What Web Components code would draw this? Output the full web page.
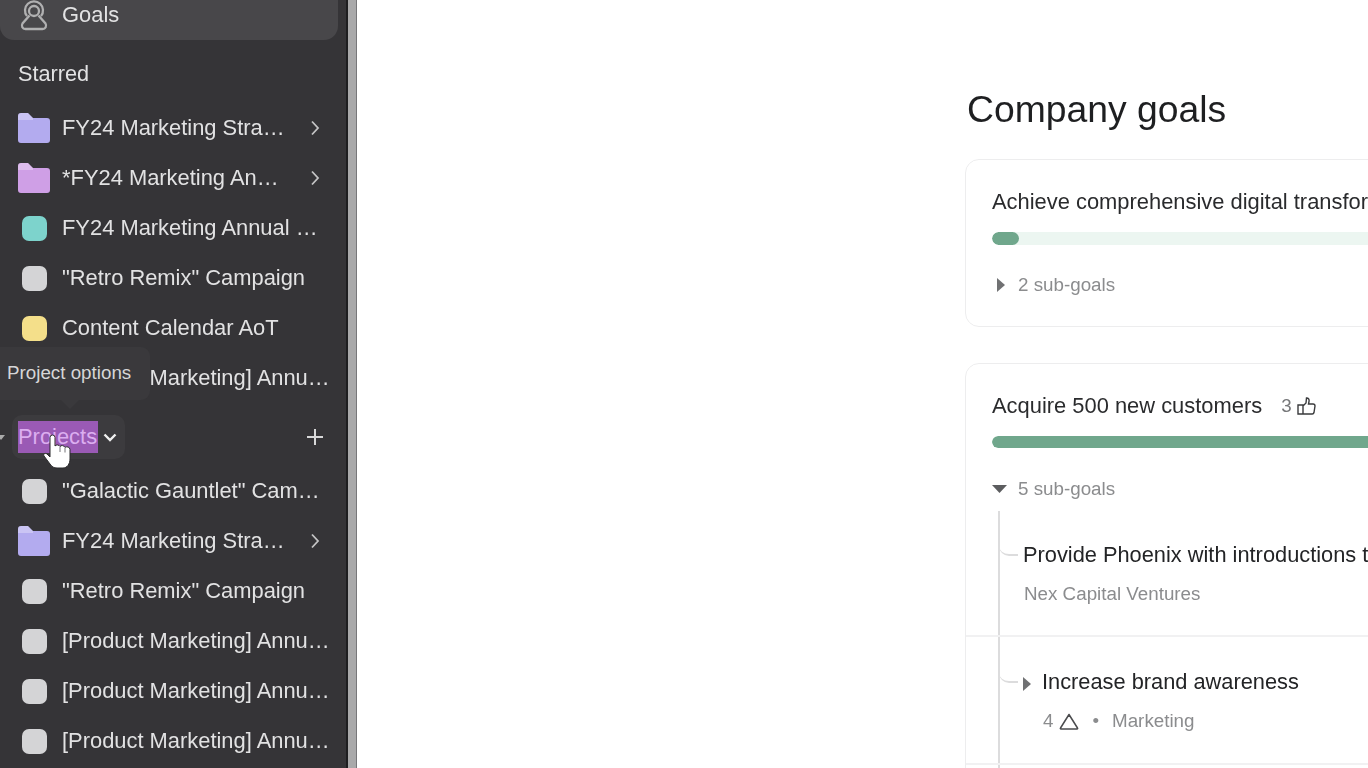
<!DOCTYPE html>
<html lang="en">
<head>
<meta charset="utf-8">
<title>Company goals</title>
<style>
  html, body { margin: 0; height: 100%; overflow: hidden; background: #fff; }
  body { font-family: "Liberation Sans", Arial, sans-serif; }
</style>
</head>
<body>
<app-shell>
  <side-bar slot="side">
    <nav-row icon="goal" active>Goals</nav-row>
    <side-heading>Starred</side-heading>
    <nav-row icon="folder" color="#b3abef" more>FY24 Marketing Stra…</nav-row>
    <nav-row icon="folder" color="#cf9fe6" more>*FY24 Marketing An…</nav-row>
    <nav-row color="#7dd3cc">FY24 Marketing Annual …</nav-row>
    <nav-row>"Retro Remix" Campaign</nav-row>
    <nav-row color="#f4df8a">Content Calendar AoT</nav-row>
    <nav-row>[Product Marketing] Annu…</nav-row>
    <projects-header></projects-header>
    <nav-row>"Galactic Gauntlet" Cam…</nav-row>
    <nav-row icon="folder" color="#b3abef" more>FY24 Marketing Stra…</nav-row>
    <nav-row>"Retro Remix" Campaign</nav-row>
    <nav-row>[Product Marketing] Annu…</nav-row>
    <nav-row>[Product Marketing] Annu…</nav-row>
    <nav-row>[Product Marketing] Annu…</nav-row>
  </side-bar>
  <goals-page>
    <goal-card progress="27" toggle="closed" count="2 sub-goals">Achieve comprehensive digital transformation across the business</goal-card>
    <goal-card progress="640" toggle="open" count="5 sub-goals">
      Acquire 500 new customers<like-count slot="extra">3</like-count>
      <sub-goal slot="rows" elbow="43" title-text="Provide Phoenix with introductions to our partners">
        <span>Nex Capital Ventures</span>
      </sub-goal>
      <sub-goal slot="rows" elbow="44" expandable title-text="Increase brand awareness">
        <warn-count>4</warn-count><span class="dot">•</span><span>Marketing</span>
      </sub-goal>
      <sub-goal slot="rows" elbow="44" title-text=""></sub-goal>
    </goal-card>
  </goals-page>
</app-shell>

<script>
function tpl(html) {
  const t = document.createElement('template');
  t.innerHTML = html;
  return t;
}

const shellTpl = tpl(`
<style>
  :host { display: flex; height: 768px; overflow: hidden; filter: blur(.7px); }
  .rule { width: 11px; flex: none; box-sizing: border-box; background: #a9a9aa;
    border-left: 2px solid #1e1e20; border-right: 1px solid #77777a; }
  .main { flex: 1; min-width: 0; overflow: hidden; }
</style>
<slot name="side"></slot>
<div class="rule"></div>
<div class="main"><slot></slot></div>`);

class AppShell extends HTMLElement {
  constructor() {
    super();
    this.attachShadow({ mode: 'open' }).appendChild(shellTpl.content.cloneNode(true));
  }
}

const sideTpl = tpl(`
<style>
  :host { display: block; width: 346px; flex: none; height: 768px; overflow: hidden;
    background: #353437; color: #e2e2e3; font-size: 21.9px; position: relative; }
  .inner { margin-top: -10px; }
  .tip { position: absolute; left: 0; top: 347px; width: 150px; height: 53px; box-sizing: border-box;
    padding: 0 0 2px 7px; display: flex; align-items: center; background: #3a393c; border-radius: 0 9px 9px 0;
    font-size: 18.8px; color: #d6d6d7; }
  .tip::after { content: ""; position: absolute; left: 61px; top: 53px; border: 9px solid transparent;
    border-top-color: #3a393c; border-bottom: 0; }
</style>
<div class="inner"><slot></slot></div>
<div class="tip">Project options</div>`);

class SideBar extends HTMLElement {
  constructor() {
    super();
    this.attachShadow({ mode: 'open' }).appendChild(sideTpl.content.cloneNode(true));
  }
}

const navTpl = tpl(`
<style>
  :host { display: flex; align-items: center; height: 50px; box-sizing: border-box; padding-left: 18px; white-space: nowrap; }
  :host([active]) { background: #48474a; border-radius: 0 0 14px 14px; margin-right: 8px; }
  .ic { width: 32px; height: 30px; margin-right: 12px; flex: none; display: flex; align-items: center; justify-content: center; }
  .sq { width: 25px; height: 25px; border-radius: 7px; }
  .chev { position: absolute; left: 310px; }
  svg { display: block; }
</style>
<span class="ic"></span><slot></slot>`);

const chevron = '<svg class="chev" width="10" height="16" viewBox="0 0 10 16" fill="none" stroke="#c4c4c5" stroke-width="1.800"><path d="M2 1.500L8 8l-6 6.500"/></svg>';

class NavRow extends HTMLElement {
  constructor() {
    super();
    this.attachShadow({ mode: 'open' }).appendChild(navTpl.content.cloneNode(true));
  }

  connectedCallback() {
    const box = this.shadowRoot.querySelector('.ic');
    const kind = this.getAttribute('icon');
    const color = this.getAttribute('color') || '#d4d4d6';
    if (kind === 'folder') {
      box.innerHTML = `<svg width="32" height="30" viewBox="0 0 32 30"><path d="M0 3a3 3 0 0 1 3-3h7l5 5h14a3 3 0 0 1 3 3v19a3 3 0 0 1-3 3H3a3 3 0 0 1-3-3z" fill="${color}"/><path d="M0 3a3 3 0 0 1 3-3h7l5 5v2H0z" fill="#fff" opacity=".3"/></svg>`;
    } else if (kind === 'goal') {
      box.innerHTML = '<svg width="28" height="32" viewBox="0 0 28 32" fill="none" stroke="#b0b0b1" stroke-width="2.300"><path d="M7 17a9 9 0 1 1 14 0"/><circle cx="14" cy="12" r="5"/><path d="M9.500 16.500L2.500 24.500c-1.500 2.500 0 5.500 3 5.500h17c3 0 4.500-3 3-5.500l-7-8"/></svg>';
    } else {
      box.innerHTML = `<span class="sq" style="background:${color}"></span>`;
    }
    if (this.hasAttribute('more')) this.shadowRoot.innerHTML += chevron;
  }
}

const headTpl = tpl(`
<style>
  :host { display: flex; align-items: center; height: 63px; padding: 6px 0 1px 18px; box-sizing: border-box; font-size: 21.7px; }
</style>
<slot></slot>`);

class SideHeading extends HTMLElement {
  constructor() {
    super();
    this.attachShadow({ mode: 'open' }).appendChild(headTpl.content.cloneNode(true));
  }
}

const projTpl = tpl(`
<style>
  :host { display: flex; align-items: center; height: 63px; box-sizing: border-box; padding: 5px 23px 0 12px; position: relative; }
  .marker { position: absolute; left: -3px; top: 32px; border: 4px solid transparent; border-top: 5px solid #aaa; border-bottom: 0; }
  .chip { display: flex; align-items: center; height: 44px; width: 113px; box-sizing: border-box; padding-left: 6px;
    background: #3c3b3e; border-radius: 10px; }
  .sel { background: #9a5ab5; color: #dcaef0; height: 32px; line-height: 32px; width: 80px; }
  .down { margin-left: 5px; }
  .plus { margin-left: auto; display: block; }
  .hand { position: absolute; left: 40px; top: 29px; }
</style>
<span class="marker"></span>
<span class="chip"><span class="sel">Projects</span>
  <svg class="down" width="14" height="9" viewBox="0 0 14 9" fill="none" stroke="#f0f0f0" stroke-width="2.400"><path d="M1.500 1.500L7 7l5.500-5.500"/></svg>
</span>
<svg class="plus" width="16" height="16" viewBox="0 0 16 16" stroke="#d8d8d9" stroke-width="2"><path d="M8 0v16M0 8h16"/></svg>
<svg class="hand" width="38" height="38" viewBox="0 0 38 38"><path d="M10 5.500a2.500 2.500 0 0 1 5 0V14c1-1.500 4-1.500 5 .5 1-1.500 4-1.200 5 .8 1.500-1 5-.5 5 2.200V27c0 5-3 9-7 9h-6c-3 0-5-1-7-4l-6-8c-1-2 1-3.500 3-2l3 3z" fill="#fff" stroke="#2a2a2c" stroke-width="1"/><path d="M20 15v5M25 15.500v5" stroke="#77777a" stroke-width="1"/></svg>`);

class ProjectsHeader extends HTMLElement {
  constructor() {
    super();
    this.attachShadow({ mode: 'open' }).appendChild(projTpl.content.cloneNode(true));
  }
}

const pageTpl = tpl(`
<style>
  :host { display: block; padding-left: 608px; width: 1300px; color: #1e1f21; }
  h1 { margin: 0 0 28px 2px; font-weight: 400; font-size: 37.3px; line-height: 44px; padding-top: 87px; }
</style>
<h1>Company goals</h1>
<slot></slot>`);

class GoalsPage extends HTMLElement {
  constructor() {
    super();
    this.attachShadow({ mode: 'open' }).appendChild(pageTpl.content.cloneNode(true));
  }
}

const cardTpl = tpl(`
<style>
  :host { display: block; width: 1000px; box-sizing: border-box; border: 1.500px solid #ededee; border-radius: 14px; margin-bottom: 36px; }
  .head { padding: 29px 25px 0 26px; }
  .title { font-size: 21.9px; line-height: 26px; display: flex; align-items: center; white-space: nowrap; color: #2a2b2d; }
  .track { height: 13px; border-radius: 7px; background: #ecf6f1; margin-top: 17px; overflow: hidden; }
  .fill { height: 100%; background: #70a78c; border-radius: 7px; }
  .count { display: flex; align-items: center; font-size: 18.8px; line-height: 24px; color: #8b8c8e; margin-top: 28px; padding-bottom: 29px; }
  .tri { width: 26px; flex: none; display: block; }
  :host([toggle="open"]) .count { margin-top: 29px; padding-bottom: 10px; }
  :host([toggle="open"]) .track { margin-top: 17px; height: 12px; }
</style>
<div class="head">
  <div class="title"><slot></slot><slot name="extra"></slot></div>
  <div class="track"><div class="fill"></div></div>
  <div class="count"><span class="tri"></span><span class="label"></span></div>
</div>
<slot name="rows"></slot>`);

class GoalCard extends HTMLElement {
  constructor() {
    super();
    this.attachShadow({ mode: 'open' }).appendChild(cardTpl.content.cloneNode(true));
  }

  connectedCallback() {
    const root = this.shadowRoot;
    root.querySelector('.fill').style.width = this.getAttribute('progress') + 'px';
    root.querySelector('.label').textContent = this.getAttribute('count');
    root.querySelector('.tri').innerHTML = this.getAttribute('toggle') === 'open'
      ? '<svg width="16" height="10" viewBox="0 0 16 10" style="display:block"><path d="M0 1h15L7.500 9z" fill="#5c5d5f"/></svg>'
      : '<svg width="16" height="14" viewBox="0 0 16 14" style="display:block"><path d="M5 0l8 7-8 7z" fill="#707173"/></svg>';
  }
}

const likeTpl = tpl(`
<style>
  :host { display: inline-flex; align-items: center; font-size: 18.8px; color: #77787a; margin-left: 19px; gap: 5px; }
</style>
<slot></slot>
<svg width="19" height="18" viewBox="0 0 19 18" fill="none" stroke="#3a3b3d" stroke-width="1.400"><path d="M1 8h5v9H1zM6 9l3-3 .5-5c2 0 3 1.500 2.500 3.500L11.500 7h4.500c1.500 0 2 1 2 2l-1 6.500c-.2 1-1 1.500-1.800 1.500H6"/></svg>`);

class LikeCount extends HTMLElement {
  constructor() {
    super();
    this.attachShadow({ mode: 'open' }).appendChild(likeTpl.content.cloneNode(true));
  }
}

const warnTpl = tpl(`
<style>
  :host { display: inline-flex; align-items: center; gap: 6px; }
</style>
<slot></slot>
<svg width="20" height="17" viewBox="0 0 20 17" fill="none" stroke="#4a4b4d" stroke-width="1.500"><path d="M10 1.500l8.500 13.500a.6.6 0 0 1-.5 1H2a.6.6 0 0 1-.5-1z" stroke-linejoin="round"/></svg>`);

class WarnCount extends HTMLElement {
  constructor() {
    super();
    this.attachShadow({ mode: 'open' }).appendChild(warnTpl.content.cloneNode(true));
  }
}

const subTpl = tpl(`
<style>
  :host { display: flex; border-bottom: 2px solid #f1f1f2; padding-left: 32px; min-height: 124px; }
  :host(:last-child) { border-bottom: 0; }
  .rail { width: 23px; flex: none; border-left: 2px solid #dcdcdd; box-sizing: content-box; }
  .elbow { width: 19px; border-bottom: 2px solid #dcdcdd; border-bottom-left-radius: 10px; margin-left: -1px; }
  .body { padding: 31px 0 30px; }
  .name { display: flex; align-items: center; font-size: 21.8px; line-height: 26px; white-space: nowrap; color: #232426; }
  .name svg { margin-right: 11px; margin-top: 4px; }
  .meta { display: flex; align-items: center; gap: 13px; margin-top: 15px; font-size: 18.8px; line-height: 22px; color: #8b8c8e; margin-left: 1px; }
  :host([expandable]) .body { padding: 32px 0 31px; }
  :host([expandable]) .meta { margin-left: 20px; }
</style>
<div class="rail"><div class="elbow"></div></div>
<div class="body">
  <div class="name"></div>
  <div class="meta"><slot></slot></div>
</div>`);

class SubGoal extends HTMLElement {
  constructor() {
    super();
    this.attachShadow({ mode: 'open' }).appendChild(subTpl.content.cloneNode(true));
  }

  connectedCallback() {
    const root = this.shadowRoot;
    root.querySelector('.elbow').style.height = this.getAttribute('elbow') + 'px';
    const name = root.querySelector('.name');
    if (this.hasAttribute('expandable')) {
      name.innerHTML = '<svg width="8" height="14" viewBox="0 0 8 14"><path d="M0 0l8 7-8 7z" fill="#707173"/></svg>';
    }
    name.append(this.getAttribute('title-text'));
  }
}

customElements.define('app-shell', AppShell);
customElements.define('side-bar', SideBar);
customElements.define('nav-row', NavRow);
customElements.define('side-heading', SideHeading);
customElements.define('projects-header', ProjectsHeader);
customElements.define('goals-page', GoalsPage);
customElements.define('goal-card', GoalCard);
customElements.define('like-count', LikeCount);
customElements.define('warn-count', WarnCount);
customElements.define('sub-goal', SubGoal);
</script>
</body>
</html>
